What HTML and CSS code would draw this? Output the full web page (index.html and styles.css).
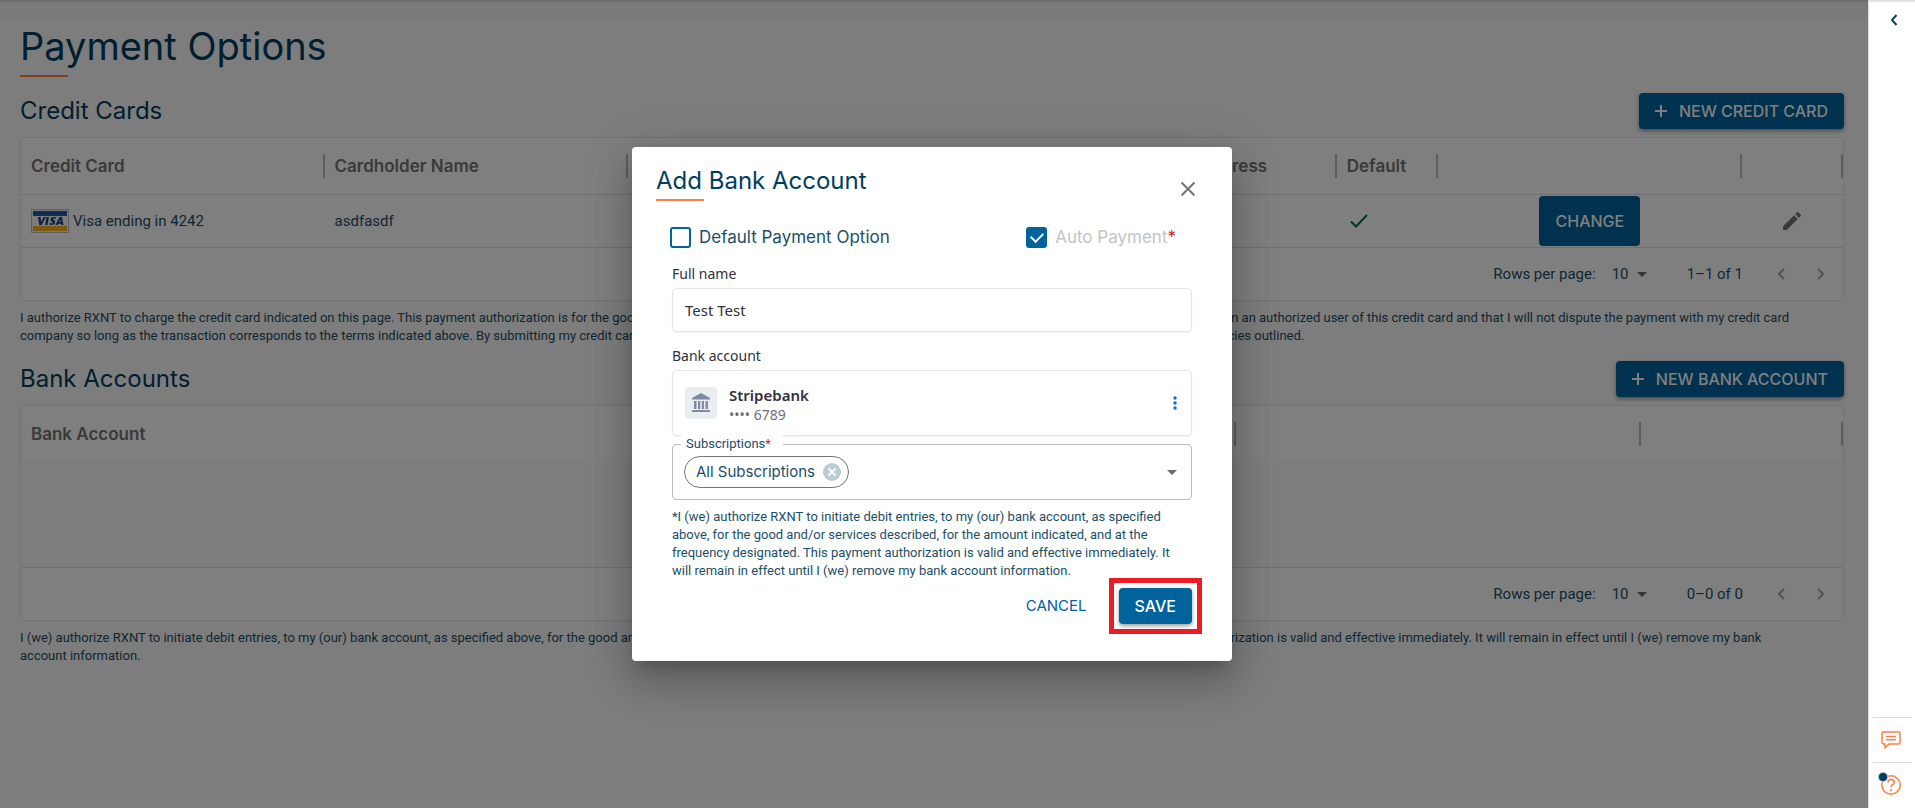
FILE: index.html
```html
<!DOCTYPE html>
<html lang="en">
<head>
<meta charset="utf-8">
<title>Payment Options</title>
<link rel="stylesheet" href="styles.css">
</head>
<body>
<div class="app">
  <div class="stage">
    <main class="page">
      <h1 class="page-title">Payment Options</h1>

      <section class="block">
        <div class="block-head">
          <h2 class="heading">Credit Cards</h2>
          <button class="btn" type="button"><svg class="plus" viewBox="0 0 12 12"><path d="M6 0v12M0 6h12"/></svg>NEW CREDIT CARD</button>
        </div>
        <div class="grid">
          <table class="table">
            <colgroup><col class="w3"><col class="w3"><col class="w5"><col class="w2"><col class="w1"><col class="w3"><col class="w1"></colgroup>
            <thead>
              <tr><th>Credit Card</th><th>Cardholder Name</th><th></th><th>Billing Address</th><th>Default</th><th></th><th></th></tr>
            </thead>
            <tbody>
              <tr>
                <td><span class="card-cell">
                  <svg class="visa" viewBox="0 0 38 24"><rect x=".5" y=".5" width="37" height="23" fill="#f7f7f7" stroke="#bcbccc"/><rect x="2" y="2" width="34" height="5" fill="#1d5ba6"/><rect x="2" y="17" width="34" height="5" fill="#fcb316"/><path fill="#20437f" d="M7 8h2.6l.6 5 2.4-5h2.5l-4.500 8H8.200zM15.600 8h2.400l-1.500 8h-2.400zM25 8.300l-.4 1.700c-1.300-.6-2.600-.5-2.700.1 0 .8 2.500 1 2.300 3.200-.2 2.600-3.300 3.200-6 2.300l.4-1.800c1.500.7 3.100.7 3.200-.1 0-.9-2.500-1-2.300-3.200.2-2.400 3-3 5.500-2.200zM28.600 8h2.300l1.600 8h-2.300l-.2-1.200h-2.600l-.7 1.200h-2.400zm-.4 5.100h1.600l-.5-2.700z"/></svg>
                  Visa ending in 4242</span></td>
                <td>asdfasdf</td>
                <td></td>
                <td></td>
                <td><svg class="tick" viewBox="0 0 18 14"><path d="M1 7.500l5 5L17 1"/></svg></td>
                <td class="center"><button class="btn btn-tall" type="button">CHANGE</button></td>
                <td class="center"><button class="icon-btn" type="button" aria-label="Edit card"><svg width="24" height="24" viewBox="0 0 24 24"><path fill="#757575" d="M3 17.250V21h3.750L17.810 9.940l-3.750-3.750zM20.710 7.040a1 1 0 0 0 0-1.410l-2.340-2.340a1 1 0 0 0-1.410 0l-1.830 1.830 3.750 3.750z"/></svg></button></td>
              </tr>
            </tbody>
          </table>
          <div class="pager">
            <label for="rows-cards">Rows per page:</label>
            <span class="pick"><select id="rows-cards"><option>10</option></select><svg class="caret" viewBox="0 0 10 5"><path d="M0 0h10L5 5z"/></svg></span>
            <span class="range">1–1 of 1</span>
            <button class="icon-btn nav" type="button" aria-label="Previous page" disabled><svg viewBox="0 0 8 12"><path d="M7 1L2 6l5 5"/></svg></button>
            <button class="icon-btn nav" type="button" aria-label="Next page" disabled><svg viewBox="0 0 8 12"><path d="M1 1l5 5-5 5"/></svg></button>
          </div>
        </div>
        <p class="legal">I authorize RXNT to charge the credit card indicated on this page. This payment authorization is for the good and/or services described, for the amount indicated, and at the frequency designated. I certify that I am an authorized user of this credit card and that I will not dispute the payment with my credit card company so long as the transaction corresponds to the terms indicated above. By submitting my credit card information I confirm that I have read, understood and agree to the payment terms and the refund policies outlined.</p>
      </section>

      <section class="block">
        <div class="block-head">
          <h2 class="heading">Bank Accounts</h2>
          <button class="btn" type="button"><svg class="plus" viewBox="0 0 12 12"><path d="M6 0v12M0 6h12"/></svg>NEW BANK ACCOUNT</button>
        </div>
        <div class="grid">
          <table class="table">
            <colgroup><col class="half-a"><col class="half-b"><col class="half-c"></colgroup>
            <thead>
              <tr><th>Bank Account</th><th></th><th></th></tr>
            </thead>
          </table>
          <div class="no-rows"></div>
          <div class="pager">
            <label for="rows-banks">Rows per page:</label>
            <span class="pick"><select id="rows-banks"><option>10</option></select><svg class="caret" viewBox="0 0 10 5"><path d="M0 0h10L5 5z"/></svg></span>
            <span class="range">0–0 of 0</span>
            <button class="icon-btn nav" type="button" aria-label="Previous page" disabled><svg viewBox="0 0 8 12"><path d="M7 1L2 6l5 5"/></svg></button>
            <button class="icon-btn nav" type="button" aria-label="Next page" disabled><svg viewBox="0 0 8 12"><path d="M1 1l5 5-5 5"/></svg></button>
          </div>
        </div>
        <p class="legal">I (we) authorize RXNT to initiate debit entries, to my (our) bank account, as specified above, for the good and/or services described, for the amount indicated, and at the frequency designated. This payment authorization is valid and effective immediately. It will remain in effect until I (we) remove my bank account information.</p>
      </section>
    </main>

    <div class="backdrop">
      <div class="dialog" role="dialog" aria-labelledby="dialog-title">
        <header class="dialog-head">
          <h2 class="heading underlined" id="dialog-title">Add Bank Account</h2>
          <button class="icon-btn close" type="button" aria-label="Close"><svg width="16" height="16" viewBox="0 0 16 16"><path d="M1.500 1.500l13 13M14.500 1.500l-13 13" stroke="#757575" stroke-width="2"/></svg></button>
        </header>
        <form class="form">
          <div class="checks">
            <label class="check"><input type="checkbox">Default Payment Option</label>
            <label class="check check-off"><input type="checkbox" checked disabled><span>Auto Payment<b class="req">*</b></span></label>
          </div>
          <label class="stripe-label" for="full-name">Full name</label>
          <input class="stripe-input" id="full-name" type="text" value="Test Test">
          <div class="stripe-label">Bank account</div>
          <div class="bank">
            <span class="bank-icon"><svg width="20" height="20" viewBox="0 0 20 20"><path fill="#7d8ba4" d="M10 0l9 5v1.500H1V5zM3 8h2.500v8H3zM7 8h2.200v8H7zM10.800 8H13v8h-2.200zM14.500 8H17v8h-2.500zM1 17h18v2H1z"/></svg></span>
            <span class="bank-text"><strong>Stripebank</strong><small>•••• 6789</small></span>
            <button class="icon-btn" type="button" aria-label="Bank options"><svg width="4" height="14" viewBox="0 0 4 14" fill="#0570de"><circle cx="2" cy="2" r="1.700"/><circle cx="2" cy="7" r="1.700"/><circle cx="2" cy="12" r="1.700"/></svg></button>
          </div>
          <div class="combo">
            <label class="combo-label" for="subs">Subscriptions<b class="req">*</b></label>
            <span class="chip">All Subscriptions<button class="icon-btn" type="button" aria-label="Remove"><svg width="18" height="18" viewBox="0 0 18 18"><circle cx="9" cy="9" r="9" fill="#bccad3"/><path d="M5.500 5.500l7 7M12.500 5.500l-7 7" stroke="#fff" stroke-width="1.800"/></svg></button></span>
            <input class="combo-input" id="subs" type="text">
            <button class="icon-btn" type="button" aria-label="Open list"><svg class="caret" viewBox="0 0 10 5"><path d="M0 0h10L5 5z"/></svg></button>
          </div>
          <p class="legal legal-dialog">*I (we) authorize RXNT to initiate debit entries, to my (our) bank account, as specified above, for the good and/or services described, for the amount indicated, and at the frequency designated. This payment authorization is valid and effective immediately. It will remain in effect until I (we) remove my bank account information.</p>
          <div class="actions">
            <button class="btn-text" type="button">CANCEL</button>
            <button class="btn callout" type="button">SAVE</button>
          </div>
        </form>
      </div>
    </div>
  </div>

  <aside class="rail">
    <button class="icon-btn rail-toggle" type="button" aria-label="Expand panel"><svg width="8" height="12" viewBox="0 0 8 12"><path d="M6.500 1L2 6l4.500 5" fill="none" stroke="#064a46" stroke-width="2"/></svg></button>
    <div class="rail-item"><button class="icon-btn" type="button" aria-label="Messages"><svg width="20" height="18" viewBox="0 0 20 18" fill="none" stroke="#fe7f43" stroke-width="1.500"><path d="M2.500 1h15Q19 1 19 2.500v9q0 1.500-1.500 1.500H8l-4 3.700V13H2.500Q1 13 1 11.500v-9Q1 1 2.500 1z"/><path d="M5 5.500h10M5 8.700h10"/></svg></button></div>
    <div class="rail-item"><button class="icon-btn" type="button" aria-label="Help"><svg width="26" height="26" viewBox="0 1 26 26"><circle cx="13" cy="14" r="9.200" fill="none" stroke="#fe7f43" stroke-width="1.500"/><path d="M10 11.500q0-3 3.100-3t3.100 2.700q0 1.500-1.700 2.500-1.500 1-1.500 2.800" fill="none" stroke="#fe7f43" stroke-width="1.600"/><circle cx="13" cy="19" r="1.100" fill="#fe7f43"/><circle cx="5" cy="6" r="5" fill="#a9c0cd"/><circle cx="5" cy="6" r="4" fill="#003e61"/></svg></button></div>
  </aside>
</div>
</body>
</html>
```
FILE: styles.css
```css
* { box-sizing: border-box; }

body {
  margin: 0;
  font-family: Roboto, "Open Sans", sans-serif;
  font-size: 15px;
  line-height: 20px;
  color: #1c4e68;
}

h1, h2, p { margin: 0; }
button, input, select { font: inherit; color: inherit; }
button { cursor: pointer; }
svg { display: block; flex: none; }

.app { display: flex; min-height: 100vh; }

.stage {
  position: relative;
  flex: 1;
  min-width: 0;
  background: #fafafa;
}

/* Page */
.page {
  padding: 0 24px 20px 20px;
  border-top: 19px solid #f4f4f4;
}

.page-title, .heading {
  font-family: Inter, "Open Sans", sans-serif;
  font-weight: 400;
  color: #003e61;
}

.page-title {
  padding-top: 3px;
  font-size: 38px;
  line-height: 48px;
}

.heading { font-size: 24px; line-height: 32px; }

.page-title::after, .underlined::after {
  content: "";
  display: block;
  width: 48px;
  height: 2px;
  background: #fe7f43;
}

.page-title::after { margin-top: 5px; }
.underlined::after { margin-top: 2px; }

.block { padding-top: 16px; }

.block-head {
  display: flex;
  align-items: center;
  justify-content: space-between;
  padding-bottom: 8px;
}

.btn {
  display: inline-flex;
  align-items: center;
  gap: 12px;
  height: 36px;
  padding: 0 16px;
  border: 0;
  border-radius: 4px;
  background: #00639c;
  box-shadow: 0 2px 4px rgba(0, 0, 0, .4);
  color: #fff;
  font-family: Inter, "Open Sans", sans-serif;
  font-size: 16px;
  font-weight: 500;
}

.btn-tall { height: 50px; box-shadow: none; }

.plus { width: 12px; height: 12px; stroke: #fff; stroke-width: 2; }

.icon-btn {
  display: inline-flex;
  align-items: center;
  justify-content: center;
  padding: 0;
  border: 0;
  background: none;
}

.grid {
  border: 1px solid #e6e6e6;
  border-radius: 4px;
  background: #fff;
  overflow: hidden;
}

.table {
  width: 100%;
  table-layout: fixed;
  border-collapse: collapse;
  text-align: left;
}

.w1 { width: 5.56%; }
.w2 { width: 11.11%; }
.w3 { width: 16.66%; }
.w5 { width: 27.78%; }
.half-a { width: 66.67%; }
.half-b { width: 22.22%; }
.half-c { width: 11.11%; }

.table th {
  position: relative;
  height: 56px;
  padding: 0 10px;
  font-family: Inter, "Open Sans", sans-serif;
  font-size: 17px;
  font-weight: 600;
  color: #757575;
  white-space: nowrap;
}

.table th::after {
  content: "";
  position: absolute;
  top: 16px;
  right: 0;
  width: 2px;
  height: 24px;
  background: #bdbdbd;
}

.table td {
  height: 53px;
  padding: 0 10px;
  border-top: 1px solid #e0e0e0;
}

.table .center { text-align: center; }
.table .center .btn, .table .center .icon-btn { vertical-align: middle; }

.card-cell { display: flex; align-items: center; gap: 4px; }
.visa { width: 38px; height: 24px; }
.tick { width: 18px; height: 14px; margin-left: 3px; fill: none; stroke: #006d5b; stroke-width: 2; }

.no-rows { height: 105px; background: #fafafa; }

.pager {
  display: flex;
  align-items: center;
  height: 53px;
  padding-right: 2px;
  border-top: 1px solid #e0e0e0;
  justify-content: flex-end;
}

.pick {
  display: flex;
  align-items: center;
  gap: 8px;
  margin: 0 40px 0 16px;
}

.pick select {
  appearance: none;
  border: 0;
  padding: 0;
  background: none;
}

.caret { width: 10px; height: 5px; fill: #6b6b6b; }

.nav { width: 40px; height: 40px; }
.nav svg { width: 8px; height: 12px; fill: none; stroke: #a8a8a8; stroke-width: 2; }
.range { margin-right: 18px; }

.legal { padding: 8px 40px 0 0; font-size: 13px; line-height: 18px; }

/* Dialog */
.backdrop {
  position: absolute;
  inset: 0;
  display: flex;
  align-items: center;
  justify-content: center;
  padding-right: 4px;
  background: rgba(0, 0, 0, .5);
  box-shadow: inset 0 4px 3px -3px rgba(0, 0, 0, .2);
}

.dialog {
  width: 600px;
  padding: 18px 24px 37px;
  border-radius: 4px;
  background: #fff;
  box-shadow: 0 11px 15px -7px rgba(0, 0, 0, .2), 0 24px 38px 3px rgba(0, 0, 0, .14), 0 9px 46px 8px rgba(0, 0, 0, .12);
}

.dialog-head {
  display: flex;
  align-items: flex-end;
  justify-content: space-between;
  padding-right: 12px;
}

.close { height: 24px; }

.form { padding: 24px 16px 0; }

.checks {
  display: flex;
  justify-content: space-between;
  margin-left: -2px;
  padding-bottom: 15px;
}

.check {
  display: flex;
  align-items: center;
  gap: 8px;
  font-family: Inter, "Open Sans", sans-serif;
  font-size: 17px;
  line-height: 24px;
}

.check-off { padding-right: 16px; color: #c4c4c4; }

.check input {
  appearance: none;
  width: 21px;
  height: 21px;
  margin: 0;
  border: 2px solid #00639c;
  border-radius: 3px;
  background: #fff;
}

.check input:checked {
  display: grid;
  place-items: center;
  background: #00639c;
}

.check input:checked::after {
  content: "";
  width: 6px;
  height: 10px;
  border: solid #fff;
  border-width: 0 2px 2px 0;
  rotate: 45deg;
  translate: 0 -1px;
}

.req { font-weight: 400; color: #c62828; }

.stripe-label, .stripe-input, .bank { font-family: "Noto Sans", sans-serif; color: #30313d; }
.stripe-label { display: block; font-size: 14px; padding-bottom: 4px; }

.stripe-input, .bank {
  width: 100%;
  padding: 0 12px;
  border: 1px solid #e6e6e6;
  border-radius: 5px;
  background: #fff;
  box-shadow: 0 1px 2px rgba(0, 0, 0, .06);
}

.stripe-input { height: 44px; margin-bottom: 14px; font-size: 15px; }

.bank {
  display: flex;
  align-items: center;
  gap: 12px;
  height: 66px;
  padding-right: 14px;
}

.bank-icon {
  display: grid;
  place-items: center;
  width: 32px;
  height: 32px;
  border-radius: 4px;
  background: #ebeef1;
}

.bank-text { display: flex; flex: 1; flex-direction: column; padding-top: 4px; }
.bank-text strong { font-size: 15px; font-weight: 600; }
.bank-text small { font-size: 14px; color: #6d6e78; }

.combo {
  position: relative;
  display: flex;
  align-items: center;
  height: 56px;
  margin-top: 8px;
  padding: 0 14px 0 11px;
  border: 1px solid #bdbdbd;
  border-radius: 4px;
}

.combo-label {
  position: absolute;
  top: -11px;
  left: 8px;
  padding: 0 12px 0 5px;
  background: #fff;
  font-size: 13px;
}

.chip {
  display: flex;
  align-items: center;
  gap: 8px;
  height: 32px;
  padding: 0 7px 0 11px;
  border: 1px solid #757575;
  border-radius: 16px;
  font-family: Inter, "Open Sans", sans-serif;
  font-size: 15px;
}

.combo-input { flex: 1; min-width: 0; border: 0; outline: 0; background: none; }

.legal-dialog { padding-right: 8px; }

.actions {
  display: flex;
  align-items: center;
  justify-content: flex-end;
  gap: 24px;
  padding-top: 8px;
}

.btn-text {
  padding: 8px;
  border: 0;
  background: none;
  font-family: Inter, "Open Sans", sans-serif;
  color: #00639c;
}

.callout { position: relative; }

.callout::after {
  content: "";
  position: absolute;
  inset: -10px;
  border: 5px solid #ed1c24;
}

/* Side rail */
.rail {
  display: flex;
  flex-direction: column;
  width: 47px;
  padding: 0 3px 1px 4px;
  border-left: 1px solid #dcdcdc;
  background: #fff;
  box-shadow: inset 0 4px 3px -3px rgba(0, 0, 0, .2);
}

.rail-toggle { height: 40px; padding-left: 2px; margin-bottom: auto; }

.rail-item {
  display: grid;
  place-items: center;
  height: 45px;
  padding-right: 4px;
  border-top: 1px solid #dcdcdc;
}
```
